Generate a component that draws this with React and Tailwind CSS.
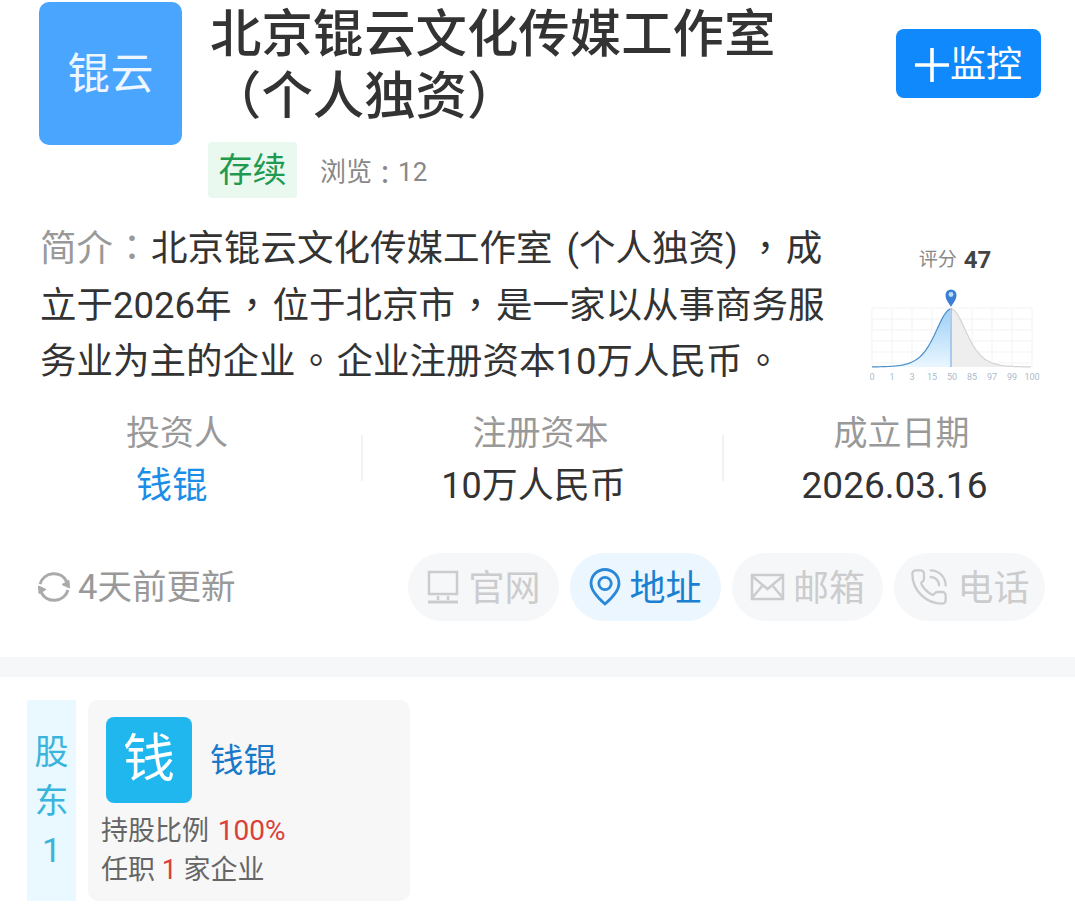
import React from "react";
import { PhoneCall } from "lucide-react";

const font = { fontFamily: 'Roboto, "Noto Sans CJK SC", sans-serif' };

// sech^2 bell, close to the score curve in the reference
const bell = (x) => {
  const c = Math.cosh((x - 81) / 20.5);
  return 60 - 58 / (c * c);
};

const curvePoints = (from, to) => {
  const pts = [];
  for (let x = from; x <= to; x += 2) pts.push(`${x},${bell(x).toFixed(2)}`);
  return pts;
};

// centred full-width punctuation, as in the reference
function Punct({ children }) {
  return <span className="inline-block w-[41px] text-center font-['Noto_Sans_CJK_TC']">{children}</span>;
}

function ScoreChart() {
  const labels = ["0", "1", "3", "15", "50", "85", "97", "99", "100"];
  const left = curvePoints(2, 81).join(" ");
  const right = curvePoints(81, 162).join(" ");
  return (
    <svg width="170" height="96" viewBox="0 -18 170 96" className="block">
      <defs>
        <linearGradient id="blueFill" x1="0" y1="0" x2="0" y2="1">
          <stop offset="0" stopColor="#9dd0f7" />
          <stop offset="1" stopColor="#eaf6ff" />
        </linearGradient>
      </defs>
      {[1, 12, 23, 34, 45, 56].map((y) => (
        <line key={y} x1="2" x2="162" y1={y} y2={y} stroke="#f1f3f6" strokeWidth="1" />
      ))}
      {[2, 22, 42, 62, 102, 122, 142, 162].map((x) => (
        <line key={x} x1={x} x2={x} y1="1" y2="60" stroke="#f1f3f6" strokeWidth="1" />
      ))}
      <polygon points={`2,60 ${left} 81,60`} fill="url(#blueFill)" />
      <polygon points={`81,60 ${right} 162,60`} fill="#eeeeee" />
      <polyline points={right} fill="none" stroke="#d4d4d4" strokeWidth="1.2" />
      <polyline points={left} fill="none" stroke="#4d8fc9" strokeWidth="1.2" />
      <line x1="81" x2="81" y1="1" y2="60" stroke="#6aa3dc" strokeWidth="1" />
      <path d="M81 0 C79 -4 75.5 -7 75.5 -12 A5.5 5.5 0 0 1 86.5 -12 C86.5 -7 83 -4 81 0 Z" fill="#3a7fd5" />
      <circle cx="81" cy="-12.5" r="2.4" fill="#bcdcf8" />
      {labels.map((t, i) => (
        <text key={t} x={2 + i * 20} y="73" textAnchor="middle" fontSize="9" fill="#a9bbcd" style={font}>
          {t}
        </text>
      ))}
    </svg>
  );
}

function Pill({ icon, label, active }) {
  return (
    <div
      className={`flex h-[68px] w-[151px] items-center justify-center gap-[8px] rounded-[34px] text-[36px] ${
        active ? "bg-[#ecf6fe] text-[#1a80d2]" : "bg-[#f6f7f9] text-[#cccccc]"
      }`}
    >
      {icon}
      <span className="pt-[4px]">{label}</span>
    </div>
  );
}

export default function App() {
  return (
    <div className="h-[918px] w-[1075px] overflow-hidden bg-white text-[#333333]" style={font}>
      {/* header */}
      <div className="flex pl-[39px] pr-[34px] pt-[2px]">
        <div className="flex h-[143px] w-[143px] shrink-0 items-center justify-center rounded-[10px] bg-[#4aa5ff] pt-[2px] text-[43px] text-[#eef7ff]">
          锟云
        </div>
        <div className="ml-[28px] w-[590px] pt-[2px]">
          <div className="text-[51.4px] font-medium leading-[62px]">
            北京锟云文化传媒工作室
            <br />
            （个人独资）
          </div>
          <div className="ml-[-2px] mt-[14px] flex h-[56px] items-center">
            <span className="flex h-[56px] w-[89px] items-center justify-center rounded-[4px] bg-[#e9f9ef] pt-[1px] text-[34px] text-[#1f9a50]">
              存续
            </span>
            <span className="ml-[23px] flex items-center pt-[5px] text-[26px] text-[#888888]">
              浏览<span className="font-['Noto_Sans_CJK_TC']">：</span>12
            </span>
          </div>
        </div>
        <div className="ml-auto mt-[27px] flex h-[69px] w-[145px] items-center justify-center rounded-[8px] bg-[#0f89fb] pt-[2px] text-[36px] text-white">
          <svg width="34" height="34" viewBox="0 0 34 34" stroke="currentColor" strokeWidth="3.6" className="mr-[1px]">
            <path d="M0 17 H34 M17 0 V34" />
          </svg>
          <span>监控</span>
        </div>
      </div>

      {/* intro + score */}
      <div className="mt-[20px] flex pl-[40px]">
        <div className="w-[828px] text-[36.5px] leading-[56.5px]">
          <div className="h-[56.5px] whitespace-nowrap">
            <span className="text-[#999999]">
              简介
              <span className="inline-block w-[38px] text-center font-['Noto_Sans_CJK_TC']">：</span>
            </span>
            北京锟云文化传媒工作室 <span className="ml-[5px]">(个人独资)</span>
            <span className="ml-[7px]">
              <Punct>，</Punct>
            </span>
            成
          </div>
          <div className="h-[56.5px] whitespace-nowrap">
            立于2026年<Punct>，</Punct>位于北京市<Punct>，</Punct>是一家以从事商务服
          </div>
          <div className="h-[56.5px] whitespace-nowrap">
            务业为主的企业<Punct>。</Punct>企业注册资本10万人民币<Punct>。</Punct>
          </div>
        </div>
        <div className="ml-[2px] flex flex-col items-center pt-[27px]">
          <div className="flex items-center gap-[7px] leading-[30px]">
            <span className="text-[19px] text-[#888888]">评分</span>
            <span className="text-[24px] font-bold text-[#444444]">47</span>
          </div>
          <div className="mt-[14px]">
            <ScoreChart />
          </div>
        </div>
      </div>

      {/* basic facts */}
      <div className="mt-[15px] flex text-center text-[36px] leading-[54px]">
        <div className="w-[361px]">
          <div className="pr-[7px] pt-[3px] text-[34px] text-[#999999]">投资人</div>
          <div className="-mt-[1px] pr-[17px] text-[#1a8ee6]">钱锟</div>
        </div>
        <div className="my-[32px] w-[2px] bg-[#f1f2f4]" />
        <div className="w-[359px]">
          <div className="pr-[4px] pt-[3px] text-[34px] text-[#999999]">注册资本</div>
          <div className="-mt-[1px] pr-[18px]">10万人民币</div>
        </div>
        <div className="my-[32px] w-[2px] bg-[#f1f2f4]" />
        <div className="w-[351px]">
          <div className="pl-[4px] pt-[3px] text-[34px] text-[#999999]">成立日期</div>
          <div className="-mt-[1px] pr-[10px] text-[37px]">2026.03.16</div>
        </div>
      </div>

      {/* update time + contact pills */}
      <div className="mt-[40px] flex items-center pl-[36px]">
        <svg width="36" height="36" viewBox="0 0 36 36" fill="none" stroke="#aaaaaa" strokeWidth="3">
          <path d="M4 15 A14.5 14.5 0 0 1 31 13" />
          <path d="M32 21 A14.5 14.5 0 0 1 5 23" />
          <path d="M33.5 19 L26 15.5 L33 11.5 Z" fill="#aaaaaa" strokeWidth="1" />
          <path d="M2.5 17 L10 20.5 L3 24.5 Z" fill="#aaaaaa" strokeWidth="1" />
        </svg>
        <span className="ml-[6px] pt-[2px] text-[34.5px] text-[#999999]">4天前更新</span>
        <div className="ml-auto flex gap-[11px] pr-[30px]">
          <Pill
            label="官网"
            icon={
              <svg width="34" height="36" viewBox="0 0 34 36" fill="none" stroke="#cccccc" strokeWidth="2.5">
                <rect x="3" y="3" width="28" height="22" />
                <path d="M12 27 V31 M22 27 V31" />
                <path d="M2 33 H32" strokeWidth="3" />
              </svg>
            }
          />
          <Pill
            active
            label="地址"
            icon={
              <svg width="32" height="38" viewBox="0 0 32 38" fill="none" stroke="#2a88d8" strokeWidth="2.8">
                <path d="M16 36 C9 30 2 23 2 15.5 A14 14 0 0 1 30 15.5 C30 23 23 30 16 36 Z" />
                <circle cx="16" cy="15.5" r="6.2" />
              </svg>
            }
          />
          <Pill
            label="邮箱"
            icon={
              <svg width="35" height="30" viewBox="0 0 35 30" fill="none" stroke="#cccccc" strokeWidth="2.5">
                <rect x="2" y="3" width="31" height="24" />
                <path d="M2 4 L17.5 17 L33 4" />
                <path d="M2 26 L13 13 M33 26 L22 13" />
              </svg>
            }
          />
          <Pill label="电话" icon={<PhoneCall size={40} strokeWidth={1.4} className="text-[#cccccc]" />} />
        </div>
      </div>

      <div className="mt-[36px] h-[20px] bg-[#f6f7f9]" />

      {/* shareholder */}
      <div className="mt-[23px] flex pl-[27px]">
        <div className="flex h-[201px] w-[49px] flex-col items-center justify-center bg-[#e9f9ff] pt-[3px] text-[34px] leading-[49px] text-[#39b4dd]">
          <span>股</span>
          <span>东</span>
          <span>1</span>
        </div>
        <div className="ml-[12px] h-[201px] w-[322px] rounded-[10px] bg-[#f7f7f8] pl-[13px] pt-[17px]">
          <div className="ml-[5px] flex items-center">
            <div className="flex h-[86px] w-[86px] items-center justify-center rounded-[8px] bg-[#1fb7ee] text-[52px] text-white">
              钱
            </div>
            <span className="ml-[18px] pt-[3px] text-[33.5px] text-[#1a78c8]">钱锟</span>
          </div>
          <div className="mt-[8px] text-[27px] leading-[39px] text-[#666666]">
            <div>
              持股比例 <span className="ml-[2px] text-[28px] text-[#d9403a]">100%</span>
            </div>
            <div>
              任职 <span className="text-[#d9403a]">1</span> 家企业
            </div>
          </div>
        </div>
      </div>
    </div>
  );
}
